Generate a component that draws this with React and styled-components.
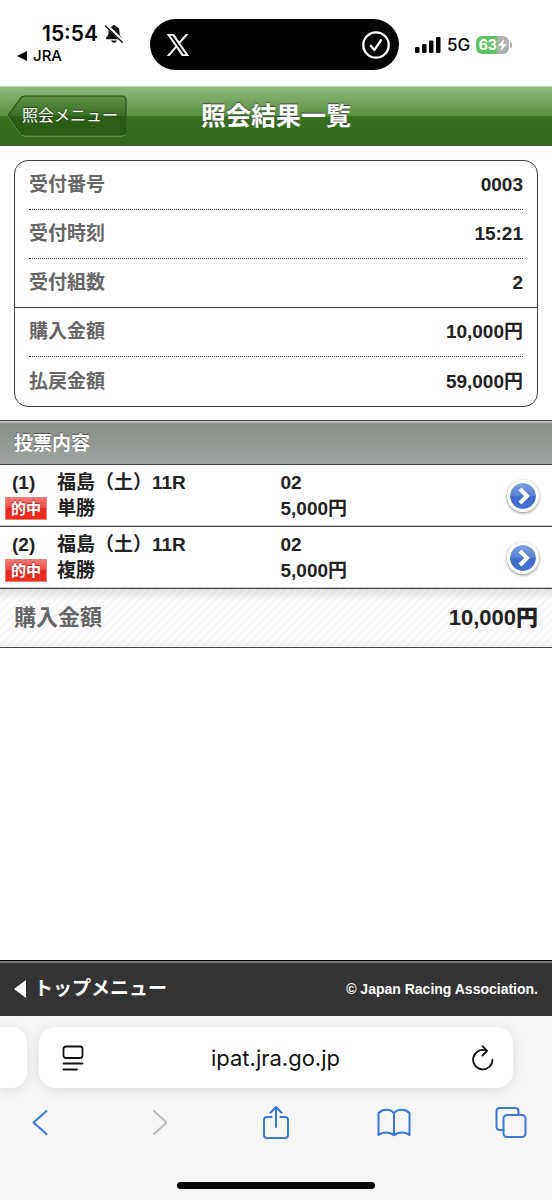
import styled, { createGlobalStyle } from 'styled-components'

const receipt = [
    { label: '受付番号', value: '0003' },
    { label: '受付時刻', value: '15:21' },
    { label: '受付組数', value: '2', last: true },
    { label: '購入金額', value: '10,000円' },
    { label: '払戻金額', value: '59,000円', end: true },
];

const bets = [
    { no: '(1)', race: '福島（土）11R', type: '単勝', horse: '02', amount: '5,000円' },
    { no: '(2)', race: '福島（土）11R', type: '複勝', horse: '02', amount: '5,000円' },
];

export default function App(){
    return(
        <Page>
            <GlobalStyle />
            <StatusBar />
            <Header>
                <BackButton type='button'>
                    <BackShape />
                    <span>照会メニュー</span>
                </BackButton>
                <h1>照会結果一覧</h1>
            </Header>
            <Main>
                <Receipt>
                    {receipt.map((item) => (
                        <ReceiptRow key={item.label} $last={item.last} $end={item.end}>
                            <dt>{item.label}</dt>
                            <dd>{item.value}</dd>
                        </ReceiptRow>
                    ))}
                </Receipt>
                <SectionTitle>投票内容</SectionTitle>
                <BetList>
                    {bets.map((bet) => <Bet key={bet.no} bet={bet} />)}
                </BetList>
                <Total>
                    <span>購入金額</span>
                    <strong>10,000円</strong>
                </Total>
            </Main>
            <Footer>
                <a href='#top'>
                    <svg width='12' height='18' viewBox='0 0 12 18'><path d='M12 0v18L0 9z' fill='#fff' /></svg>
                    トップメニュー
                </a>
                <small>© Japan Racing Association.</small>
            </Footer>
            <Browser />
        </Page>
    )
}

function StatusBar(){
    return(
        <Status>
            <Clock>
                <div>
                    <time>15:54</time>
                    <svg width='20' height='20' viewBox='0 0 20 20'>
                        <path d='M10 1c-.9 0-1.500.6-1.700 1.300C5.700 3.100 4.500 5.200 4.500 8c0 3.200-1 4.300-2.200 5.500-.8.8-.4 1.700.6 1.700h14.200c1 0 1.400-.9.600-1.700C16.500 12.300 15.500 11.200 15.500 8c0-2.800-1.200-4.900-3.800-5.700C11.500 1.600 10.900 1 10 1z' fill='#111' />
                        <path d='M7.200 16.500h5.600c-.3 1.400-1.400 2.300-2.800 2.300s-2.500-.9-2.800-2.300z' fill='#111' />
                        <path d='M2.500 1.500l16.500 16' stroke='#fff' strokeWidth='3.400' />
                        <path d='M1.500 2l16.800 16.200' stroke='#111' strokeWidth='1.400' strokeLinecap='round' />
                    </svg>
                </div>
                <a href='#jra'>
                    <svg width='10' height='10' viewBox='0 0 10 10'><path d='M10 0v10L0 5z' fill='#000' /></svg>
                    JRA
                </a>
            </Clock>
            <Island>
                <svg width='22' height='22' viewBox='0 0 24 24'>
                    <path fill='#fff' stroke='#fff' strokeWidth='.8' d='M14.230 10.160 22.980 0h-2.070l-7.600 8.820L7.240 0H.240l9.180 13.340L.240 24h2.070l8.020-9.310L16.740 24h7zm-2.840 3.290-.93-1.330L3.060 1.560h3.180l5.970 8.530.93 1.330 7.760 11.090h-3.180z' />
                </svg>
                <svg width='28' height='28' viewBox='0 0 28 28' fill='none' stroke='#fff' strokeLinecap='round' strokeLinejoin='round'>
                    <circle cx='14' cy='14' r='12.700' strokeWidth='2.300' />
                    <path d='M8.800 14.800l3.500 4.300 6.700-10' strokeWidth='2.300' />
                </svg>
            </Island>
            <Signals>
                <svg width='26' height='17' viewBox='0 0 26 17' fill='#000'>
                    <rect x='0' y='11' width='4.500' height='6' rx='1.300' />
                    <rect x='7' y='8' width='4.500' height='9' rx='1.300' />
                    <rect x='14' y='4.500' width='4.500' height='12.500' rx='1.300' />
                    <rect x='21' y='1' width='4.500' height='16' rx='1.300' />
                </svg>
                <span>5G</span>
                <Battery>
                    <b>63</b>
                    <svg width='9' height='12' viewBox='0 0 9 12'><path d='M6.200 0L0 6.800h3.800L2.600 12 9 5H5.100z' fill='#fff' /></svg>
                </Battery>
            </Signals>
        </Status>
    )
}

function BackShape(){
    return(
        <svg width='120' height='42' viewBox='0 0 120 42' fill='none'>
            <defs>
                <linearGradient id='back' x1='0' y1='0' x2='0' y2='1'>
                    <stop offset='0' stopColor='#5c9446' />
                    <stop offset='.5' stopColor='#3a6f26' />
                    <stop offset='.5' stopColor='#2a5d15' />
                    <stop offset='1' stopColor='#2b5f17' />
                </linearGradient>
            </defs>
            <path d='M17 2h97q4 0 4 4v31q0 4-4 4H17q-3 0-5-3L1 22q-1-1 0-2L12 5q2-3 5-3z' stroke='#86b071' />
            <path d='M17 1h97q4 0 4 4v31q0 4-4 4H17q-3 0-5-3L1 21q-1-1 0-2L12 4q2-3 5-3z' fill='url(#back)' stroke='#23500f' strokeWidth='1.200' />
        </svg>
    )
}

function Bet({ bet }){
    return(
        <li>
            <BetLink href='#detail'>
                <Mark>
                    <span>{bet.no}</span>
                    <Hit>的中</Hit>
                </Mark>
                <Lines>
                    <span>{bet.race}</span>
                    <span>{bet.type}</span>
                </Lines>
                <Lines>
                    <span>{bet.horse}</span>
                    <span>{bet.amount}</span>
                </Lines>
                <Arrow>
                    <svg width='12' height='18' viewBox='0 0 12 18'><path d='M2 2l7 7-7 7' fill='none' stroke='#fff' strokeWidth='4' /></svg>
                </Arrow>
            </BetLink>
        </li>
    )
}

function Browser(){
    return(
        <BrowserBar>
            <Tabs>
                <PrevTab />
                <Address>
                    <button type='button' aria-label='ページメニュー'>
                        <svg width='22' height='26' viewBox='0 0 22 26' fill='none' stroke='#111' strokeWidth='1.800' strokeLinecap='round'>
                            <rect x='1.500' y='1.500' width='19' height='11.500' rx='2.500' />
                            <path d='M1.500 18.500h19M1.500 24.500h13.500' />
                        </svg>
                    </button>
                    <input type='text' aria-label='アドレス' defaultValue='ipat.jra.go.jp' />
                    <button type='button' aria-label='再読み込み'>
                        <svg width='22' height='26' viewBox='0 0 22 26' fill='none' stroke='#111' strokeWidth='1.800' strokeLinecap='round' strokeLinejoin='round'>
                            <path d='M20.500 14.700A9.700 9.700 0 1 1 14 5.500' />
                            <path d='M10.500 1.200l4.600 4.600-4.600 4.700' />
                        </svg>
                    </button>
                </Address>
            </Tabs>
            <Toolbar>
                <button type='button' aria-label='戻る'>
                    <svg width='34' height='34' viewBox='0 0 34 34'><path d='M22.500 6L9.500 17.500 22.500 29' /></svg>
                </button>
                <button type='button' aria-label='進む' disabled>
                    <svg width='34' height='34' viewBox='0 0 34 34'><path d='M12 6L24.500 17.500 12 29' /></svg>
                </button>
                <button type='button' aria-label='共有'>
                    <svg width='34' height='34' viewBox='0 0 34 34'>
                        <path d='M12.500 12H8q-3 0-3 3v15q0 3 3 3h18q3 0 3-3V15q0-3-3-3h-4.500' />
                        <path d='M17 22V2.500M11.500 7.700L17 2l5.500 5.700' />
                    </svg>
                </button>
                <button type='button' aria-label='ブックマーク'>
                    <svg width='34' height='34' viewBox='0 0 34 34'>
                        <path d='M17 8.500C15 5.500 12.300 4.800 9.500 4.800S3.500 6 1.500 8v22C3.500 28.300 6.500 27.500 9.500 27.500s5.500.9 7.500 2.800c2-1.900 4.500-2.800 7.500-2.800s6 .8 8 2.500V8c-2-2-5.200-3.200-8-3.200S19 5.500 17 8.500zM17 8.500v21.500' />
                    </svg>
                </button>
                <button type='button' aria-label='タブ一覧'>
                    <svg width='34' height='34' viewBox='0 0 34 34'>
                        <path d='M9.500 25H6q-3.500 0-3.500-3.500v-15Q2.500 3 6 3h15q3.500 0 3.500 3.500V10' />
                        <rect x='9.500' y='10' width='22' height='22' rx='3.500' />
                    </svg>
                </button>
            </Toolbar>
            <HomeBar />
        </BrowserBar>
    )
}

const GlobalStyle = createGlobalStyle`
    * {
        box-sizing: border-box;
    }

    body, h1, h2, ul, dl, dd {
        margin: 0;
        padding: 0;
    }

    body {
        background: #fff;
        color: #222;
        font-family: "Liberation Sans", "Noto Sans CJK JP", sans-serif;
    }

    button {
        padding: 0;
        border: none;
        background: none;
        font-family: inherit;
        cursor: pointer;
    }

    a {
        color: inherit;
        text-decoration: none;
    }

    svg {
        display: block;
        flex-shrink: 0;
    }
`;

const Page = styled.div`
    display: flex;
    flex-direction: column;
    min-height: 100vh;
`;

const Status = styled.div`
    display: grid;
    grid-template-columns: 1fr 249px 1fr;
    height: 86px;
    padding: 19px 3px 16px 0;
    color: #000;
    font-family: Inter, sans-serif;
`;

const Clock = styled.div`
    padding: 2px 0 0 17px;

    div{
        display: flex;
        align-items: center;
        gap: 6px;
        padding-left: 25px;
    }

    time{
        font-size: 21px;
        font-weight: 600;
        line-height: 26px;
    }

    a{
        display: flex;
        align-items: center;
        gap: 6px;
        font-size: 15px;
        font-weight: 500;
        line-height: 18px;
    }
`;

const Island = styled.div`
    display: flex;
    align-items: center;
    justify-content: space-between;
    height: 51px;
    padding: 0 9px 0 17px;
    border-radius: 26px;
    background: #000;
`;

const Signals = styled.div`
    display: flex;
    align-items: center;
    gap: 6px;
    height: 51px;
    padding-left: 16px;
    font-size: 17px;
    font-weight: 500;
`;

const Battery = styled.div`
    position: relative;
    display: flex;
    align-items: center;
    justify-content: center;
    gap: 1px;
    width: 33px;
    height: 18px;
    border-radius: 6px;
    background: linear-gradient(90deg, #5fc463 63%, #b0b0b0 63%);
    color: #fff;
    font-size: 14px;

    b{
        line-height: 18px;
    }

    &::after{
        content: '';
        position: absolute;
        right: -3px;
        width: 2px;
        height: 6px;
        border-radius: 0 2px 2px 0;
        background: #aaa;
    }
`;

const Header = styled.header`
    position: relative;
    display: flex;
    align-items: center;
    justify-content: center;
    height: 60px;
    border-top: 1px solid #b9d5ab;
    border-bottom: 1px solid #4a4a4a;
    background: linear-gradient(180deg, #90b97e 0%, #55913f 50%, #36701f 51%, #32691c 100%);

    h1{
        color: #fff;
        font-size: 25px;
        line-height: 36px;
        text-shadow: 0 -1px 1px #444;
    }
`;

const BackButton = styled.button`
    position: absolute;
    left: 8px;
    width: 120px;
    height: 42px;
    color: #fff;
    font-size: 16px;
    line-height: 24px;
    text-shadow: 0 -1px 1px #234a12;

    svg{
        position: absolute;
        inset: 0;
    }

    span{
        position: relative;
        padding-left: 4px;
        white-space: nowrap;
    }
`;

const Main = styled.main`
    flex: 1;
`;

const Receipt = styled.dl`
    margin: 14px 14px 13px;
    border: 1px solid #3d393b;
    border-radius: 14px;
    font-size: 19px;
    font-weight: bold;
    line-height: 26px;
`;

const ReceiptRow = styled.div`
    display: flex;
    align-items: center;
    justify-content: space-between;
    height: 49px;
    margin: ${props => props.$last ? '0' : '0 14px'};
    padding: ${props => props.$last ? '0 14px' : '0'};
    border-bottom: ${props => props.$end ? 'none' : props.$last ? '1px solid #3d393b' : '1px dotted #333'};

    dt{
        color: #666;
    }
`;

const SectionTitle = styled.h2`
    height: 45px;
    padding: 0 14px;
    border-top: 1px solid #444;
    border-bottom: 1px solid #444;
    background: linear-gradient(180deg, #888f89, #9da39e);
    box-shadow: inset 0 2px 0 #b5bab6;
    color: #fff;
    font-size: 19px;
    line-height: 45px;
    text-shadow: 0 -1px 1px #555;
`;

const BetList = styled.ul`
    list-style: none;
`;

const BetLink = styled.a`
    display: grid;
    grid-template-columns: 52px 223fr 224fr 34px;
    align-items: center;
    height: 62px;
    padding: 0 13px 0 5px;
    border-bottom: 1px solid #444;
    box-shadow: inset 0 -1px 0 #ccc;
    font-size: 19px;
    font-weight: bold;
    line-height: 26px;
`;

const Mark = styled.div`
    display: flex;
    flex-direction: column;
    height: 52px;

    span:first-child{
        padding-left: 7px;
    }
`;

const Hit = styled.span`
    width: 42px;
    height: 23px;
    margin-top: 1px;
    border: 1px solid #ef7a72;
    background: linear-gradient(180deg, #ee7b74 0%, #e74a41 48%, #e52a20 50%, #ee2d20 100%);
    color: #fff;
    font-size: 15px;
    line-height: 21px;
    text-align: center;
    text-shadow: 0 -1px 1px #a33;
`;

const Lines = styled.div`
    display: flex;
    flex-direction: column;
    white-space: nowrap;
`;

const Arrow = styled.span`
    display: flex;
    align-items: center;
    justify-content: center;
    justify-self: end;
    width: 32px;
    height: 32px;
    padding-left: 2px;
    border: 3px solid #fff;
    border-radius: 50%;
    background: linear-gradient(180deg, #86a5e0 0%, #5b82d4 48%, #3f6ccc 52%, #4674d2 100%) border-box;
    background-clip: padding-box;
    box-shadow: 0 1px 3px #777;
`;

const Total = styled.div`
    display: flex;
    align-items: center;
    justify-content: space-between;
    height: 59px;
    padding: 0 14px;
    border-bottom: 1px solid #444;
    background:
        linear-gradient(180deg, rgba(0, 0, 0, .1), transparent 20%, transparent 88%, rgba(0, 0, 0, .06)),
        repeating-linear-gradient(135deg, #fdfdfd 0 2px, #f6f6f6 3px 5px, #fdfdfd 6px);
    font-size: 22px;
    font-weight: bold;
    line-height: 30px;

    span{
        color: #666;
    }
`;

const Footer = styled.footer`
    display: flex;
    align-items: center;
    justify-content: space-between;
    height: 56px;
    padding: 0 14px;
    border-top: 1px solid #000;
    background: #333;
    box-shadow: inset 0 2px 0 #777;
    color: #fff;
    font-weight: bold;
    line-height: 26px;

    a{
        display: flex;
        align-items: center;
        gap: 8px;
        font-size: 19px;
    }

    small{
        font-size: 14px;
    }
`;

const BrowserBar = styled.div`
    display: flex;
    flex-direction: column;
    height: 184px;
    background: #f6f6f6;
`;

const Tabs = styled.div`
    display: flex;
    gap: 12px;
    height: 72px;
    padding: 11px 39px 0 0;
`;

const PrevTab = styled.div`
    width: 27px;
    background: #fff;
    border-radius: 0 16px 16px 0;
    box-shadow: 0 2px 12px #ddd;
`;

const Address = styled.div`
    display: flex;
    flex: 1;
    align-items: center;
    padding: 0 19px 0 23px;
    background: #fff;
    border-radius: 16px;
    box-shadow: 0 2px 12px #ddd;

    input{
        flex: 1;
        min-width: 0;
        padding: 0 5px 0 0;
        border: none;
        background: none;
        color: #111;
        font-family: Inter, sans-serif;
        font-size: 22px;
        text-align: center;
    }
`;

const Toolbar = styled.div`
    display: flex;
    justify-content: space-between;
    padding: 17px 24px 0;

    svg{
        fill: none;
        stroke: #3a78dc;
        stroke-width: 2;
        stroke-linecap: round;
        stroke-linejoin: round;
    }

    button:disabled svg{
        stroke: #bbb;
    }
`;

const HomeBar = styled.div`
    width: 198px;
    height: 7px;
    margin: auto auto 11px;
    border-radius: 4px;
    background: #000;
`;
